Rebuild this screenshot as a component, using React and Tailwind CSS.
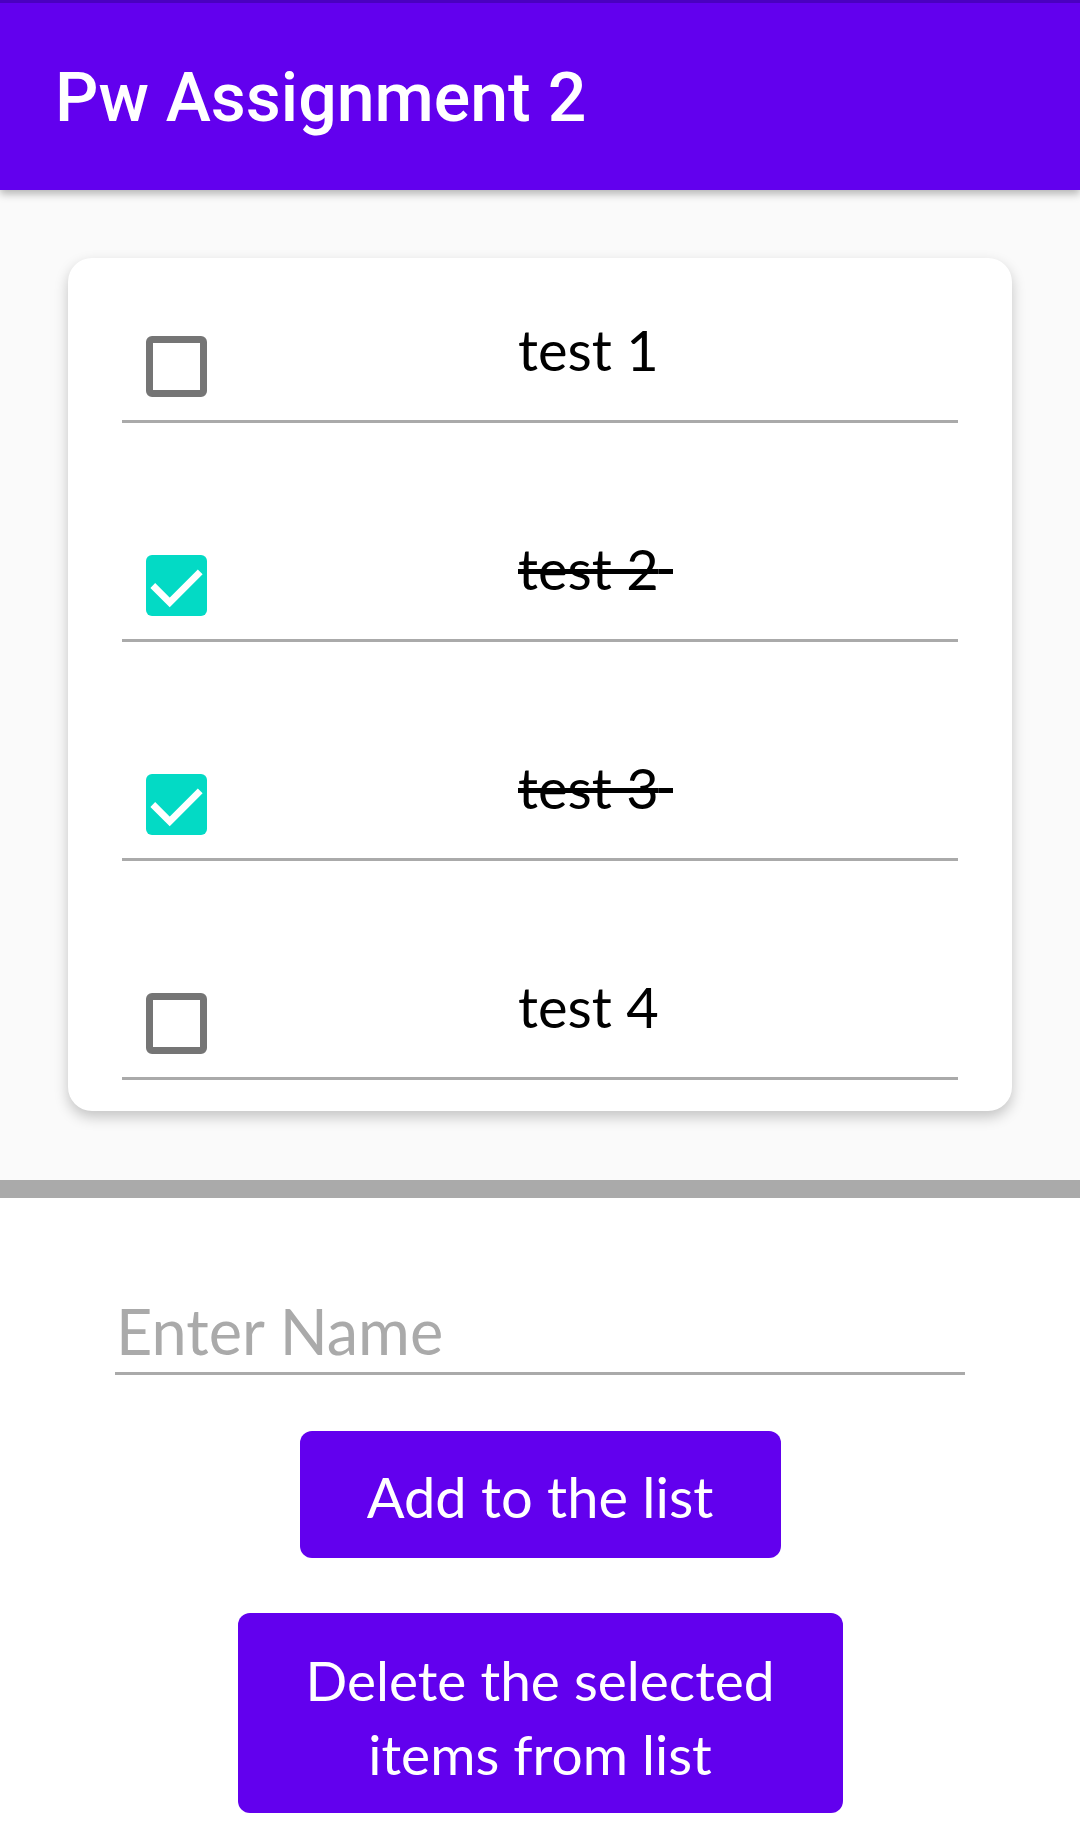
import React, { useState } from "react";

const initialItems = [
  { id: 1, name: "test 1", done: false },
  { id: 2, name: "test 2", done: true },
  { id: 3, name: "test 3", done: true },
  { id: 4, name: "test 4", done: false },
];

function Checkbox({ checked, onChange }) {
  if (checked) {
    return (
      <button
        onClick={onChange}
        className="w-[61px] h-[61px] shrink-0 rounded-[6px] bg-[#03DAC5] flex items-center justify-center"
      >
        <svg viewBox="0 0 18 18" className="w-[61px] h-[61px]">
          <polyline
            points="2,9 7,14 16,5"
            fill="none"
            stroke="#ffffff"
            strokeWidth="2"
          />
        </svg>
      </button>
    );
  }
  return (
    <button
      onClick={onChange}
      className="w-[61px] h-[61px] shrink-0 rounded-[6px] border-[7px] border-[#757575] bg-white"
    />
  );
}

export default function App() {
  const [items, setItems] = useState(initialItems);
  const [name, setName] = useState("");

  const toggle = (id) =>
    setItems(items.map((it) => (it.id === id ? { ...it, done: !it.done } : it)));

  const addItem = () => {
    if (!name.trim()) return;
    setItems([...items, { id: Date.now(), name: name.trim(), done: false }]);
    setName("");
  };

  const deleteSelected = () => setItems(items.filter((it) => !it.done));

  return (
    <div className="w-[1080px] h-[1840px] bg-white flex flex-col overflow-hidden font-['Lato',sans-serif]">
      {/* app bar */}
      <div className="relative z-10 h-[190px] shrink-0 bg-[#6200EE] shadow-[0_4px_8px_rgba(0,0,0,0.28)] flex items-center pl-[55px] border-t-[3px] border-[#4a00c0]">
        <h1 className="text-white text-[68px] font-medium font-['Roboto',sans-serif] leading-none pt-[2px]">
          Pw Assignment 2
        </h1>
      </div>

      {/* list area */}
      <div className="h-[990px] shrink-0 bg-[#FAFAFA] p-[68px]">
        <div className="bg-white rounded-[24px] shadow-[0_6px_14px_rgba(0,0,0,0.22)] px-[54px] pt-[78px] pb-[31px] flex flex-col gap-[132px]">
          {items.map((it) => (
            <div key={it.id} className="flex flex-col">
              <div className="flex items-start pl-[24px]">
                <Checkbox checked={it.done} onChange={() => toggle(it.id)} />
                <span
                  className={`ml-[311px] mt-[-14px] text-[56px] leading-[56px] text-black ${
                    it.done ? "line-through" : ""
                  }`}
                >
                  {it.name}
                  {it.done ? "\u00a0" : ""}
                </span>
              </div>
              <div className="mt-[23px] h-[3px] bg-[#AAAAAA]" />
            </div>
          ))}
        </div>
      </div>

      <div className="h-[18px] shrink-0 bg-[#AAAAAA]" />

      {/* input + buttons */}
      <div className="flex flex-col items-center pt-[97px]">
        <div className="w-[850px] border-b-[3px] border-[#AAAAAA]">
          <input
            value={name}
            onChange={(e) => setName(e.target.value)}
            placeholder="Enter Name"
            className="w-full bg-transparent outline-none text-[63px] leading-[72px] pb-[5px] pl-[1px] text-black placeholder:text-[#AAAAAA]"
          />
        </div>
        <button
          onClick={addItem}
          className="mt-[56px] w-[481px] h-[127px] rounded-[12px] bg-[#6200EE] text-white text-[56px] leading-none pt-[4px]"
        >
          Add to the list
        </button>
        <button
          onClick={deleteSelected}
          className="mt-[55px] w-[605px] h-[200px] rounded-[12px] bg-[#6200EE] text-white text-[55px] leading-[74px] pt-[8px]"
        >
          Delete the selected
          <br />
          items from list
        </button>
      </div>
    </div>
  );
}
